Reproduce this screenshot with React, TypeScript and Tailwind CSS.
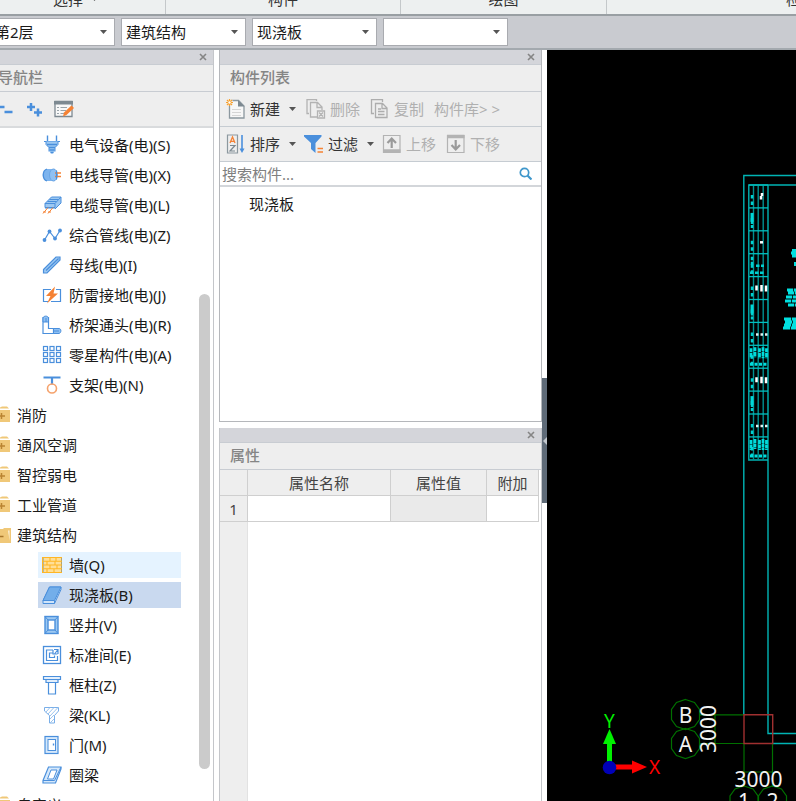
import React from 'react';

const BLUE = '#4a8fdc';
const LIGHT = '#9cc8f2';
const ORANGE = '#f58234';

type IconName =
  | 'plug' | 'conduit' | 'tray' | 'pipeline' | 'busbar' | 'lightning' | 'elbow' | 'grid' | 'hanger'
  | 'wall' | 'slab' | 'shaft' | 'room' | 'column' | 'beam' | 'door' | 'ring';

const ICONS: Record<IconName, React.ReactNode> = {
  plug: (
    <>
      <path d="M5.500 .5v6M14.500 .5v6" strokeWidth="1.400" />
      <path d="M2 6.500h16" />
      <path d="M4 6.500h12v3l-3 3.500v3l-3 3-3-3v-3L4 9.500z" fill={LIGHT} stroke="none" />
      <path d="M4 6.500v3l3 3v4M16 6.500v3l-3 3v4" />
      <path d="M5 9.500h10M7 12.500h6M7.500 15h5M8.500 17.500h3" strokeWidth="1.500" />
    </>
  ),
  conduit: (
    <>
      <path d="M4.500 4H13v12H4.500C-.5 14-.5 6 4.500 4z" fill="#7db4ee" stroke="none" />
      <path d="M5 4C0 5.500 0 14.500 5 16" strokeWidth="1.300" />
      <ellipse cx="11.500" cy="10" rx="4" ry="6" fill="#8fc0f3" stroke="#6ba6e6" />
      <path d="M13 8h6M13 11.500h6" stroke={ORANGE} strokeWidth="1.300" />
      <path d="M14.500 5.500v9" strokeWidth="1.200" />
    </>
  ),
  tray: (
    <>
      <path d="M3 8.500 9.500 2H19v6l-6 6H3z" fill={LIGHT} stroke="none" />
      <path d="M3 8.500h10L19 2M3 8.500v4h10v-4M19 2v6l-6 6M3 8.500 9.500 2H19M5.500 6.500h9M7.500 4.500h9" />
      <path d="m1 18.500 5-6M6 18.500l5-6M1 17h3M6 17h3" stroke={ORANGE} />
    </>
  ),
  pipeline: (
    <>
      <path d="m2.500 15 5-8.500 5.500 7L18 5.500" strokeWidth="1.200" />
      <g fill={BLUE} stroke="none">
        <circle cx="2.500" cy="15" r="1.900" />
        <circle cx="7.500" cy="6.500" r="1.900" />
        <circle cx="13" cy="13.500" r="1.900" />
        <circle cx="18" cy="5.500" r="1.900" />
      </g>
    </>
  ),
  busbar: (
    <>
      <path d="M1.500 14.500 14 2h4v3L5 18H1.500z" fill={LIGHT} strokeWidth="1.200" />
      <path d="M4 15.500 16.500 3.500" strokeWidth="1.200" />
    </>
  ),
  lightning: (
    <>
      <path d="M9 4.500H1.500v12H6M14 4.500h4.500v12H9" strokeWidth="1.200" />
      <path d="m13 1.500-9 9.500h4.500L5 18.500 16 8.500h-4.500z" fill={ORANGE} stroke="none" />
    </>
  ),
  elbow: (
    <>
      <path d="M1 2.500h5.500v11h5v5H1z" fill="#fff" strokeWidth="1.200" />
      <path d="M1 3C1.500 .5 6 .5 6.500 3v4H1zM11.500 13.500H17c2.500 0 2.500 4.500 0 5h-5.500z" fill="#8fc0f3" />
      <path d="M4 3v4M12 16h5" />
    </>
  ),
  grid: (
    <g fill="#fff" strokeWidth="1.200">
      {[1.500, 7.500, 13.500].map((y) =>
        [1.500, 8, 14.500].map((x) => <rect key={`${x}-${y}`} x={x} y={y} width="4" height="4" />),
      )}
    </g>
  ),
  hanger: (
    <>
      <path d="M1.500 2.500h17M10 2.500v7" strokeWidth="2.200" />
      <circle cx="10" cy="13.500" r="4.500" stroke="#f5a26c" strokeWidth="1.600" />
    </>
  ),
  wall: (
    <>
      <rect x="1" y="2.500" width="18.500" height="15" fill="#ffdf98" />
      <path d="M.5 2.500h19.500v15H.5zM1 6.300h19M1 10h19M1 13.700h19M8 2.500v3.800M14 2.500v3.800M5 6.300V10M13 6.300V10M8 10v3.700M15 10v3.700M5 13.700v3.800M12 13.700v3.800" stroke="#ffb625" strokeWidth="1.100" />
    </>
  ),
  slab: (
    <>
      <path d="M1 15.500 7.500 2H19v2.500L12.500 18.500H1z" fill="#cfe4fa" />
      <path d="M1 15.500 7.500 2H19l-6.500 13.500z" fill="#73aeea" />
      <path d="M12.500 15.500v3" />
    </>
  ),
  shaft: (
    <>
      <rect x="3" y="1.500" width="13" height="17" fill={LIGHT} strokeWidth="1.400" />
      <rect x="6" y="5" width="7" height="10" fill="#fff" strokeWidth="1.400" />
      <path d="m3 1.500 3 3.500M16 1.500 13 5M3 18.500 6 15M16 18.500 13 15" />
    </>
  ),
  room: (
    <>
      <rect x="1.500" y="1.500" width="17" height="17" strokeWidth="1.300" />
      <path d="M11 5H4.500v10.500h11V11M11 8H7.500v4.500h5V10.500M12 4.500h4V9M11 5v4h4.500M12.500 9l3.500-4.500" strokeWidth="1.200" />
    </>
  ),
  column: (
    <>
      <path d="M1.500 1.500h17v3h-2.500v3H4v-3H1.500z" fill="#e3effc" strokeWidth="1.200" />
      <path d="M6.500 8v11h7V8M4 4.500h12" fill="#fff" strokeWidth="1.200" />
    </>
  ),
  beam: (
    <>
      <path d="M2.500 2.500h14V6l-4 4.500V18h-5v-7.500l-5-4.500z" stroke="#79aee8" fill="#fff" />
      <path d="m4 7 4-4.500M6 9l6-6.500M8 11l8-8.500M8 14l4-4M8 18l4-4" stroke="#9cc4ee" />
    </>
  ),
  door: (
    <>
      <rect x="3" y="1.500" width="13" height="17" fill="#d5e8fb" strokeWidth="1.200" />
      <rect x="6" y="4.500" width="7.500" height="11" fill="#fff" />
      <path d="M11.500 8.500v2" strokeWidth="1.400" />
    </>
  ),
  ring: (
    <>
      <path d="M1 15.500 6.500 2H19v2L13.500 18H1z" fill="#d5e8fb" strokeWidth="1.200" />
      <path d="M5.500 14 9 5h6l-3.500 9z" fill="#fff" />
      <path d="M1 15.500h11.500L19 2" />
    </>
  ),
};

function ItemIcon({ name }: { name: IconName }) {
  return (
    <svg viewBox="0 0 20 20" width="20" height="20" fill="none" stroke={BLUE} strokeWidth="1" className="shrink-0">
      {ICONS[name]}
    </svg>
  );
}

function Folder({ open }: { open?: boolean }) {
  return (
    <svg viewBox="0 0 11 18" width="11" height="18" className="shrink-0">
      {open ? (
        <>
          <path d="M0 3h3l1-1h7v15H0z" fill="#f0c878" />
          <path d="M0 4.500h8L9.500 15V4.500z" fill="#fdf3dc" />
          <path d="M0 5.500h7.500L9.500 16H0z" fill="#f0c878" />
          <path d="M0 10.500h3.500" stroke="#a8772c" strokeWidth="1.500" />
        </>
      ) : (
        <>
          <path d="M0 1.500 2 .5h5l2 2H0zM0 4h10v12H0z" fill="#f0c878" />
          <path d="M0 10h5M1.500 7v6" stroke="#b98432" strokeWidth="1.500" />
        </>
      )}
    </svg>
  );
}

type TreeRow = { label: string; icon?: IconName; open?: boolean; state?: 'hover' | 'selected' };

const TREE: TreeRow[] = [
  { label: '电气设备(电)(S)', icon: 'plug' },
  { label: '电线导管(电)(X)', icon: 'conduit' },
  { label: '电缆导管(电)(L)', icon: 'tray' },
  { label: '综合管线(电)(Z)', icon: 'pipeline' },
  { label: '母线(电)(I)', icon: 'busbar' },
  { label: '防雷接地(电)(J)', icon: 'lightning' },
  { label: '桥架通头(电)(R)', icon: 'elbow' },
  { label: '零星构件(电)(A)', icon: 'grid' },
  { label: '支架(电)(N)', icon: 'hanger' },
  { label: '消防' },
  { label: '通风空调' },
  { label: '智控弱电' },
  { label: '工业管道' },
  { label: '建筑结构', open: true },
  { label: '墙(Q)', icon: 'wall', state: 'hover' },
  { label: '现浇板(B)', icon: 'slab', state: 'selected' },
  { label: '竖井(V)', icon: 'shaft' },
  { label: '标准间(E)', icon: 'room' },
  { label: '框柱(Z)', icon: 'column' },
  { label: '梁(KL)', icon: 'beam' },
  { label: '门(M)', icon: 'door' },
  { label: '圈梁', icon: 'ring' },
  { label: '自定义' },
];

const ROW_STATE = {
  none: '',
  hover: 'bg-[#e5f3ff]',
  selected: 'bg-[#c9d9ef]',
};

function Caret() {
  return (
    <svg viewBox="0 0 7 4" width="7" height="4" className="shrink-0">
      <path d="M0 0h7L3.500 4z" fill="#555" />
    </svg>
  );
}

function PanelHeader({ title, nav }: { title: string; nav?: boolean }) {
  return (
    <>
      <div className="flex h-[14px] shrink-0 items-center justify-end bg-[#d4d5da] pr-[6px]">
        <button aria-label="关闭" className="flex size-[9px] items-center justify-center">
          <svg viewBox="0 0 8 8" width="8" height="8" stroke="#858585" strokeWidth="1.600">
            <path d="m1 1 6 6M7 1 1 7" />
          </svg>
        </button>
      </div>
      <h2 className={`flex h-7 shrink-0 items-center border-y border-[#c8ccd2] bg-[#eeeeee] pb-[2px] font-medium text-[#858585] ${nav ? '-ml-[2px]' : 'pl-[10px]'}`}>
        {title}
      </h2>
    </>
  );
}

const COMBOS = ['第2层', '建筑结构', '现浇板', ''];

function ComboBar() {
  return (
    <div className="flex h-[34px] shrink-0 items-center overflow-hidden border-b-2 border-[#a3a9ae] bg-[#c9cbd0]">
      <div className="-ml-[10px] flex gap-[6px]">
        {COMBOS.map((value, i) => (
          <label key={i} className="relative flex items-center">
            <select aria-label={value || '构件'} className="h-7 w-[125px] appearance-none border border-[#a9abb0] bg-white pl-1 text-[#1a1a1a]">
              <option>{value}</option>
            </select>
            <span className="pointer-events-none absolute right-2"><Caret /></span>
          </label>
        ))}
      </div>
    </div>
  );
}

function Ribbon() {
  return (
    <div className="flex h-4 shrink-0 items-end overflow-hidden border-b-2 border-[#999fa3] bg-[#edf0f0] text-[#333]">
      <div className="flex h-5 w-[166px] shrink-0 items-center gap-2 border-r border-[#c4c8ca] pb-[10px] pl-[53px]">
        选择 <Caret />
      </div>
      <div className="flex h-5 w-[235px] shrink-0 items-center justify-center border-r border-[#c4c8ca] pb-[10px]">构件</div>
      <div className="flex h-5 w-[206px] shrink-0 items-center justify-center border-r border-[#c4c8ca] pb-[10px]">绘图</div>
      <div className="flex h-5 flex-1 items-center justify-end whitespace-nowrap pb-[10px]"><span className="-mr-5">检查</span></div>
    </div>
  );
}

function NavPanel() {
  return (
    <nav className="flex w-[214px] shrink-0 flex-col overflow-hidden border-r border-[#c4c6ca] bg-white">
      <PanelHeader title="导航栏" nav />
      <div className="flex h-9 shrink-0 items-center border-b-2 border-[#d9dbdd] bg-[#eeeeee]">
        <button aria-label="全部折叠" className="w-[27px]">
          <svg viewBox="0 0 27 20" width="27" height="20" stroke={BLUE} strokeWidth="2.500">
            <path d="M0 8h4.500M4.500 13h8" />
          </svg>
        </button>
        <button aria-label="全部展开" className="w-[27px]">
          <svg viewBox="0 0 27 20" width="27" height="20" stroke={BLUE} strokeWidth="2.500">
            <path d="M0 8h8M4 4v8M7 13.500h8M11 9.500v8" />
          </svg>
        </button>
        <button aria-label="编辑">
          <svg viewBox="0 0 21 20" width="21" height="20" fill="none">
            <path d="M1 2.500h17v15H1z" fill="#f8f8f8" stroke="#7d8991" strokeWidth="1.300" />
            <path d="M0 2h19v3.500H0z" fill="#7d8991" />
            <path d="M3 8.500h2M3 11.500h2M3 14.500h2M6.500 8.500H13M6.500 11.500H12M6.500 14.500H10" stroke="#9aa4aa" />
            <path d="m9 17.500 1-4 7.500-7 2.500 2.500-7.500 7z" fill={ORANGE} />
          </svg>
        </button>
      </div>
      <div className="flex min-h-0 flex-1">
        <ul className="min-w-0 flex-1 overflow-hidden pt-[2px]">
          {TREE.map((row) => (
            <li key={row.label} className={`flex h-[30px] items-center ${row.icon ? 'pl-[38px] pr-[18px]' : ''}`}>
              <button className={`flex h-[26px] w-full items-center whitespace-nowrap text-left ${row.icon ? 'gap-[7px] pl-1' : 'gap-[6px]'} ${ROW_STATE[row.state ?? 'none']}`}>
                {row.icon ? <ItemIcon name={row.icon} /> : <Folder open={row.open} />}
                {row.label}
              </button>
            </li>
          ))}
        </ul>
        <div className="flex w-[14px] shrink-0 flex-col pr-[3px]">
          <div className="flex-[166]" />
          <div className="flex-[476] rounded-full bg-[#cbcbcb]" />
          <div className="flex-[32]" />
        </div>
      </div>
    </nav>
  );
}

function NewIcon() {
  return (
    <svg viewBox="0 0 20 20" width="20" height="20" fill="none">
      <path d="M3.500 1.500h9l5.500 5.500v12H3.500z" fill="#f7f7f7" stroke="#8c989f" strokeWidth="1.300" />
      <path d="M12 1v6.500h6.500z" fill="#7d8991" />
      <path d="M6 10.500h9M6 13.500h9M6 16.500h9" stroke="#d5d5d5" />
      <circle cx="3.500" cy="3.500" r="3.500" fill="#eeeeee" />
      <path d="M3.500 0v7M0 3.500h7M1 1l5 5M6 1 1 6" stroke="#f8a12e" strokeWidth="1.200" />
      <circle cx="3.500" cy="3.500" r="1.200" fill="#fff" />
    </svg>
  );
}

function DeleteIcon() {
  return (
    <svg viewBox="0 0 20 20" width="20" height="20" fill="none" stroke="#b3b3b3" strokeWidth="1.300">
      <path d="M3 14.500H1v-14h9.500V2" />
      <path d="M11 18H4.500V3.500h7l4.500 4.500V11M11 3.500v5h5" />
      <path d="M11.500 12h7v7h-7zM13 13.500l4 4M17 13.500l-4 4" />
    </svg>
  );
}

function CopyIcon() {
  return (
    <svg viewBox="0 0 20 20" width="20" height="20" fill="none" stroke="#adadad" strokeWidth="1.300">
      <path d="M4 14.500H1.500v-14h11V3" />
      <path d="M5.500 4.500h7L17 9v9.500H5.500zM12 4.500v5h5M8 10h3M8 12.500h6.500M8 15.500h6.500" />
    </svg>
  );
}

function SortIcon() {
  return (
    <svg viewBox="0 0 20 20" width="20" height="20" fill="none">
      <path d="M1.500 1h10v18h-10z" stroke="#8c989f" strokeWidth="1.200" />
      <path d="m4 9 2.500-6L9 9M5 7.300h3" stroke={ORANGE} strokeWidth="1.300" />
      <path d="M4 11.500h5l-5 5.500h5" stroke="#7d8991" strokeWidth="1.200" />
      <path d="M16 1v16" stroke={BLUE} strokeWidth="1.600" />
      <path d="M13.500 14.500h5L16 19z" fill={BLUE} />
    </svg>
  );
}

function FilterIcon() {
  return (
    <svg viewBox="0 0 20 20" width="20" height="20">
      <path d="M0 1h17.500v1.500L11.500 9v10L7 15V9L0 2.500z" fill={BLUE} />
      <path d="M13.500 14.500h5.500M13.500 18h5.500" stroke={ORANGE} strokeWidth="1.600" />
    </svg>
  );
}

function MoveIcon({ down }: { down?: boolean }) {
  return (
    <svg viewBox="0 0 20 20" width="20" height="20" fill="none" stroke="#b3b3b3">
      <path d="M1.500 1.500h16.500v17H1.500z" strokeWidth="1.200" />
      <path d={down ? 'M1 2.500h17.500' : 'M1 17h17.500'} strokeWidth="3.500" />
      <path d={down ? 'M9.700 6v9M5.500 11l4.200 4.500L14 11' : 'M9.700 14V5M5.500 9l4.200-4.500L14 9'} strokeWidth="2.200" stroke="#9a9a9a" />
    </svg>
  );
}

function ToolButton({ icon, label, caret, disabled }: { icon?: React.ReactNode; label: string; caret?: boolean; disabled?: boolean }) {
  return (
    <button disabled={disabled} className="flex items-center gap-1 whitespace-nowrap text-[#333] disabled:text-[#b0b0b0]">
      {icon}
      {label}
      {caret && <span className="pl-[5px]"><Caret /></span>}
    </button>
  );
}

function ComponentPanel() {
  return (
    <section className="flex h-[372px] shrink-0 flex-col border border-t-0 border-[#b5b7bb] bg-white">
      <PanelHeader title="构件列表" />
      <div className="flex h-[35px] shrink-0 items-center gap-[10px] border-b border-[#c6ccd2] bg-[#eeeeee] pl-[6px]">
        <ToolButton icon={<NewIcon />} label="新建" caret />
        <ToolButton icon={<DeleteIcon />} label="删除" disabled />
        <ToolButton icon={<CopyIcon />} label="复制" disabled />
        <ToolButton label="构件库> >" disabled />
      </div>
      <div className="flex h-[35px] shrink-0 items-center gap-2 border-b border-[#c6ccd2] bg-[#eeeeee] pl-[6px]">
        <ToolButton icon={<SortIcon />} label="排序" caret />
        <ToolButton icon={<FilterIcon />} label="过滤" caret />
        <div className="flex gap-[10px]">
          <ToolButton icon={<MoveIcon />} label="上移" disabled />
          <ToolButton icon={<MoveIcon down />} label="下移" disabled />
        </div>
      </div>
      <label className="flex h-[25px] shrink-0 items-center border-b-2 border-[#d3d6da] pl-[2px] pr-[9px]">
        <input aria-label="搜索构件" placeholder="搜索构件..." className="min-w-0 flex-1 outline-none placeholder:text-[#808080]" />
        <svg viewBox="0 0 13 13" width="13" height="13" fill="none" stroke="#3f97cb">
          <circle cx="5.500" cy="5.500" r="4.200" strokeWidth="1.700" />
          <path d="m8.500 8.500 4 4" strokeWidth="2.200" />
        </svg>
      </label>
      <ul className="pt-1">
        <li className="flex h-[26px] items-center pl-[29px]">现浇板</li>
      </ul>
    </section>
  );
}

function PropertyPanel() {
  const cell = 'border-r border-b border-[#cfcfcf] p-0 text-center align-middle font-normal';
  return (
    <section className="flex min-h-0 flex-1 flex-col border-x border-[#c4c6ca] bg-white">
      <PanelHeader title="属性" />
      <div className="flex min-h-0 flex-1 pr-[2px]">
        <table className="w-full table-fixed border-separate border-spacing-0 text-[#444]">
          <thead>
            <tr className="h-[26px] bg-[#eeeeee]">
              <th aria-label="序号" className={`${cell} w-7`} />
              <th className={cell}>属性名称</th>
              <th className={`${cell} w-[96px]`}>属性值</th>
              <th className={`${cell} w-[52px]`}>附加</th>
            </tr>
          </thead>
          <tbody>
            <tr className="h-[26px]">
              <td className={`${cell} bg-[#eeeeee]`}>1</td>
              <td className={cell} />
              <td className={`${cell} bg-[#eaeaea]`} />
              <td className={cell} />
            </tr>
            <tr>
              <td className="border-r border-[#e2e2e2] bg-[#eeeeee]" />
              <td colSpan={3} />
            </tr>
          </tbody>
        </table>
      </div>
    </section>
  );
}

// One entry per row of the drawing's legend strip, 23 units apart.
const LEGEND = ['mark', 'text', 'dot', 'mixed', 'marks', 'text', 'dots', 'block', 'marks', 'text', 'dots', 'block'];
const LEGEND_TOP = 185;
const LEGEND_STEP = 22.9;

function LegendRow({ kind, y }: { kind: string; y: number }) {
  return (
    <g>
      <path d={`M749 ${y}H768`} stroke="#00c0c0" strokeWidth="1.300" />
      <path d={`M752 ${y + 10}v10`} stroke="#00d0d0" strokeWidth="2.500" strokeDasharray={kind === 'text' ? '6 1' : '3.500 3'} />
      {kind === 'text' && <path d={`M752 ${y + 5}v9`} stroke="#00d8d8" strokeWidth="3" />}
      {kind === 'mark' && <path d={`M762 ${y + 8}v3M761 ${y + 11}v3.500`} stroke="#fff" strokeWidth="2.500" />}
      {kind === 'dot' && <path d={`M760 ${y + 11.500}h3`} stroke="#fff" strokeWidth="2.500" />}
      {kind === 'marks' && <path d={`M756.500 ${y + 9}v5M761.500 ${y + 8.500}v6.500M766 ${y + 9}v6`} stroke="#fff" strokeWidth="2.500" />}
      {kind === 'dots' && <path d={`M756 ${y + 12}h12`} stroke="#e0f4f4" strokeWidth="2.500" strokeDasharray="2.500 2" />}
      {kind === 'mixed' && (
        <path d={`M752 ${y + 3}v11M756 ${y + 12}h8M750 ${y + 19}h15`} stroke="#00d0d0" strokeWidth="2.500" strokeDasharray="3.500 1.500" />
      )}
      {kind === 'block' && (
        <>
          <path d={`M751 ${y + 3}v10M755 ${y + 2}v10M759.500 ${y + 3}v10M763 ${y + 2}v11M766.500 ${y + 3}v10`} stroke="#00dcdc" strokeWidth="2.800" strokeDasharray="4 .6" />
          <path d={`M750 ${y + 19}h18`} stroke="#00dcdc" strokeWidth="3" strokeDasharray="3 1.500" />
        </>
      )}
    </g>
  );
}

const BUBBLE = '0,-15 9,-12 14,-5 14,5 9,12 0,15 -9,12 -14,5 -14,-5 -9,-12';

const BUBBLES = [
  { x: 685.5, y: 714.5, text: 'B' },
  { x: 685.5, y: 743.5, text: 'A' },
  { x: 744, y: 801, text: '1' },
  { x: 772.5, y: 801, text: '2' },
];

function Drawing() {
  return (
    <svg viewBox="547 50 249 751" preserveAspectRatio="xMinYMin slice" className="h-full w-full" fill="none">
      <g stroke="#00b4b4" strokeWidth="1.400">
        <path d="M796 175.500H743.800V715M796 185H748.800V460H768M768 185V733.500H796M773 743.500H796" />
        <path d="M753.500 185V460M758.200 185V460M763.200 185V460" stroke="#009090" />
      </g>
      {LEGEND.map((kind, i) => (
        <LegendRow key={i} kind={kind} y={LEGEND_TOP + i * LEGEND_STEP} />
      ))}
      <g stroke="#00e0e0" strokeWidth="3">
        <path d="M792 250.500h4M791 253h5M792 256h4M795.500 262v4" />
        <path d="M787 290h9M788 293h8M786 297h10M785 301h11M788 305h8" strokeDasharray="6 .8" />
        <path d="M784 319h12M785 322h11M784 325h12M783 328h13" strokeDasharray="7 .8" />
      </g>

      <g stroke="#007000" strokeWidth="1.200">
        <path d="M700 714.800H744M700 743.500H744M715 714V744M744 743V787M772.500 743V787M744 772H772.500" />
        {BUBBLES.map((b) => (
          <polygon key={b.text} points={BUBBLE} transform={`translate(${b.x} ${b.y})`} />
        ))}
      </g>
      <path d="M744 714.800h28.700v28.700H744z" stroke="#a03030" strokeWidth="1.400" />
      <g fill="#f2f2f2" fontSize="21" textAnchor="middle">
        {BUBBLES.map((b) => (
          <text key={b.text} x={b.x} y={b.y + 8}>{b.text}</text>
        ))}
        <text x="758.500" y="787">3000</text>
        <text transform="translate(716 729) rotate(-90)">3000</text>
      </g>

      <path d="M609.500 767V743" stroke="#00f000" strokeWidth="5" />
      <path d="m603 744 6.500-15 6.500 15z" fill="#00f000" />
      <path d="M610 767h23" stroke="#f00" strokeWidth="5" />
      <path d="m632 760.500 15 6.500-15 6.500z" fill="#f00" />
      <circle cx="609.500" cy="767.500" r="6.800" fill="#0000b8" />
      <text x="609.500" y="728" fontSize="19" textAnchor="middle" fill="#00f000">Y</text>
      <text x="654.500" y="774" fontSize="19" textAnchor="middle" fill="#f00">X</text>
    </svg>
  );
}

export default function App() {
  return (
    <div className="flex h-screen flex-col overflow-hidden bg-white font-['Noto_Sans','Noto_Sans_CJK_SC',sans-serif] text-[15px] leading-5 text-[#1a1a1a]">
      <Ribbon />
      <ComboBar />
      <div className="flex min-h-0 flex-1">
        <NavPanel />
        <div className="ml-[5px] flex w-[323px] shrink-0 flex-col gap-[6px]">
          <ComponentPanel />
          <PropertyPanel />
        </div>
        <div className="flex w-[5px] shrink-0 flex-col">
          <div className="flex-[328]" />
          <button aria-label="收起面板" className="flex flex-[125] items-center justify-end bg-[#5f6b78]">
            <svg viewBox="0 0 4 8" width="4" height="8"><path d="M4 0v8L0 4z" fill="#c3c8ce" /></svg>
          </button>
          <div className="flex-[298]" />
        </div>
        <main className="min-w-0 flex-1 overflow-hidden bg-black">
          <Drawing />
        </main>
      </div>
    </div>
  );
}
